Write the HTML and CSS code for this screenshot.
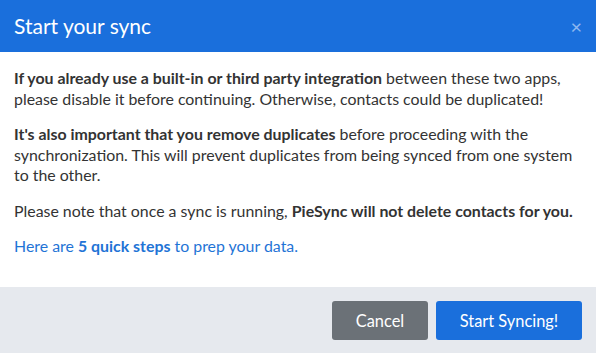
FILE: index.html
```html
<!DOCTYPE html>
<html lang="en">
<head>
  <meta charset="UTF-8">
  <title>PieSync - Start your sync</title>
  <link rel="stylesheet" href="styles.css">
</head>
<body>

<div class="modal">
  <header class="modal-header">
    <div class="modal-title">Start your sync</div>
    <button class="close-btn" aria-label="Close">&times;</button>
  </header>

  <div class="modal-body">
    <p><strong>If you already use a built-in or third party integration</strong> between these two apps, please disable it before continuing. Otherwise, contacts could be duplicated!</p>
    <p><strong>It's also important that you remove duplicates</strong> before proceeding with the synchronization. This will prevent duplicates from being synced from one system to the other.</p>
    <p>Please note that once a sync is running, <strong>PieSync will not delete contacts for you.</strong></p>
    <p class="steps">Here are <strong>5 quick steps</strong> to prep your data.</p>
  </div>

  <footer class="modal-footer">
    <button class="btn btn-cancel">Cancel</button>
    <button class="btn btn-primary">Start Syncing!</button>
  </footer>
</div>

</body>
</html>
```

FILE: styles.css
```css
* {
  margin: 0;
  padding: 0;
  box-sizing: border-box;
}

body {
  font-family: 'Lato', sans-serif;
  background-color: #fff;
  height: 100vh;
}

.modal {
  height: 100vh;
  display: flex;
  flex-direction: column;
}

.modal-header {
  background-color: #1a6fdc;
  color: white;
  height: 52px;
  padding: 0 14px;
  display: flex;
  justify-content: space-between;
  align-items: center;
}

.modal-title {
  font-size: 21px;
  margin-top: -1px;
}

.close-btn {
  background: none;
  border: none;
  color: #8fb8f0;
  font-family: 'Lato', sans-serif;
  font-size: 20px;
  line-height: 1;
  cursor: pointer;
}

.modal-body {
  flex: 1;
  padding: 16px 14px 0;
  color: #333;
  font-size: 15.9px;
  line-height: 20.5px;
}

.modal-body p {
  margin-bottom: 15px;
}

.modal-body strong {
  font-weight: bold;
}

.steps {
  color: #1f74d6;
}

.modal-footer {
  background-color: #e6e9ee;
  height: 66px;
  padding: 0 14px;
  display: flex;
  justify-content: flex-end;
  align-items: center;
  gap: 8px;
}

.btn {
  height: 39px;
  border: none;
  border-radius: 3px;
  color: white;
  font-family: 'Lato', sans-serif;
  font-size: 16.4px;
  cursor: pointer;
}

.btn-cancel {
  width: 96px;
  background-color: #6b7177;
}

.btn-primary {
  width: 146px;
  background-color: #1a6fdc;
}
```
